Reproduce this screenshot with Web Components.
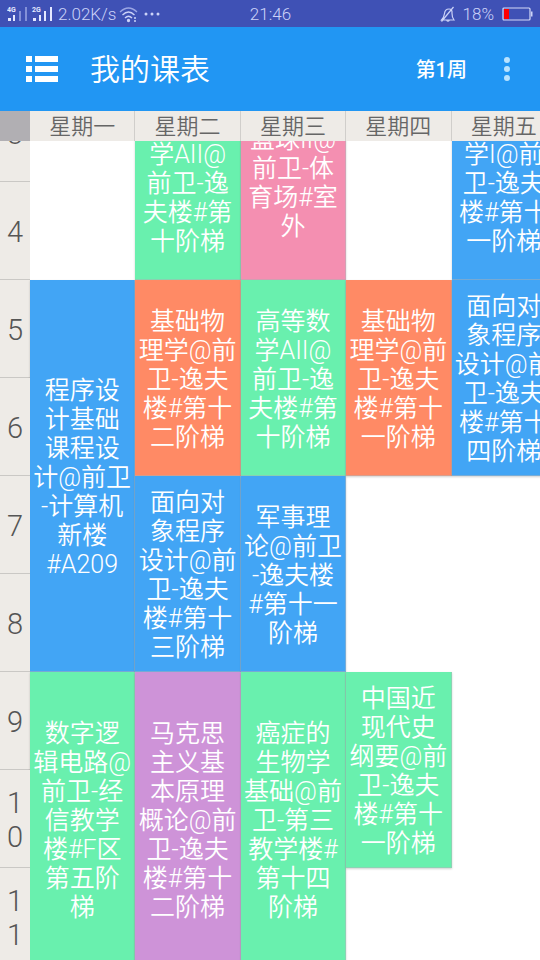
<!DOCTYPE html>
<html lang="zh-CN">
<head>
<meta charset="utf-8">
<meta name="viewport" content="width=device-width, initial-scale=1">
<title>我的课表</title>
<style>
  body { margin: 0; font-family: Roboto, "Noto Sans CJK SC", sans-serif; }
</style>
</head>
<body>
<timetable-app></timetable-app>

<script>
class ShadowElement extends HTMLElement {
  constructor() {
    super();
    this.attachShadow({ mode: 'open' }).innerHTML = this.constructor.markup;
  }
}

class StatusBar extends ShadowElement {
  static markup = `
    <style>
      :host { display: grid; grid-template-columns: 1fr auto 1fr; align-items: center;
              height: 27px; padding: 1px 2px 0 7px; background: #3f51b5; color: #ccd3f8;
              font-size: 17px; font-weight: 350; line-height: 26px; box-sizing: border-box; }
      div { display: flex; align-items: center; gap: 3px; white-space: nowrap; }
      .right { justify-content: flex-end; gap: 7px; }
      svg { display: block; flex: none; }
      time { padding-right: 4px; }
      .net { font: 700 7px Roboto, sans-serif; fill: #e4e8ff; }
    </style>
    <div class="left">
      <svg width="48" height="18" viewBox="0 0 48 18" aria-hidden="true">
        <text class="net" x="0" y="7">4G</text>
        <path fill="#e4e8ff" d="M1 13h3v3H1zM6 10h2v6H6z"/>
        <path fill="#8390d8" d="M12 6h2v10h-2zM18 2h2v14h-2z"/>
        <text class="net" x="25" y="7">2G</text>
        <path fill="#e4e8ff" d="M26 13h3v3h-3zM32 10h2v6h-2zM37 6h2v10h-2zM43 2h2v14h-2z"/>
      </svg>
      <span>2.02K/s</span>
      <svg width="19" height="17" viewBox="0 0 19 17" fill="none" stroke="#ccd3f8" stroke-width="1.3" aria-hidden="true">
        <path stroke="#9ba6e4" d="M1 6Q9.500-2 18 6"/><path d="M3.500 9Q9.500 3 15.500 9M6 12Q9.500 8.500 13 12"/>
        <circle cx="9.500" cy="14.500" r="1" fill="#ccd3f8"/><path d="M15 12h2M15 15h2"/>
      </svg>
      <svg width="24" height="6" viewBox="0 0 24 6" fill="#ccd3f8" aria-hidden="true">
        <circle cx="5" cy="3" r="1.500"/><circle cx="11" cy="3" r="1.500"/><circle cx="17" cy="3" r="1.500"/>
      </svg>
    </div>
    <time>21:46</time>
    <div class="right">
      <svg width="16" height="17" viewBox="0 0 16 17" fill="none" stroke="#ccd3f8" stroke-width="1.200" aria-hidden="true">
        <path d="M1.500 14Q4 11.500 4.500 7.500Q5 3 9 3Q12.500 3 12 7.500Q12 11.500 14 14ZM6.500 14Q8 16.500 9.500 14M13.500 1L1.500 15.500"/>
      </svg>
      <span>18%</span>
      <svg width="37" height="14" viewBox="0 0 37 14" aria-hidden="true">
        <rect x="2" y="1" width="27" height="12" rx="1" fill="none" stroke="#d5daf7" stroke-width="1.200"/>
        <path fill="#f00" d="M3 2h5v10H3z"/><path fill="#ccd3f8" d="M30 4.500h1.500v5H30z"/>
      </svg>
    </div>`;
}

class AppBar extends ShadowElement {
  static markup = `
    <style>
      :host { display: flex; align-items: center; height: 84px; padding: 0 20px 0 26px;
              box-sizing: border-box; background: #2196f3; color: #fff; }
      button { all: unset; display: block; cursor: pointer; }
      button:focus-visible { outline: 2px solid #fff; }
      svg { display: block; }
      h1 { flex: 1; margin: 0 0 0 32px; padding-top: 2px; font-size: 30px; font-weight: 350; line-height: 40px; }
      .week { padding-top: 2px; font-size: 20px; font-weight: 500; line-height: 28px; margin-right: 27px; }
    </style>
    <button aria-label="菜单">
      <svg width="32" height="26" viewBox="0 0 32 26" fill="#fff">
        <path d="M0 0h6v6H0zM9 0h23v6H9zM0 10h6v6H0zM9 10h23v6H9zM0 20h6v6H0zM9 20h23v6H9z"/>
      </svg>
    </button>
    <h1><slot></slot></h1>
    <button class="week"><slot name="week"></slot></button>
    <button aria-label="更多">
      <svg width="26" height="26" viewBox="0 0 26 26" fill="#b9e3ff">
        <circle cx="13" cy="4" r="3"/><circle cx="13" cy="13" r="3"/><circle cx="13" cy="22" r="3"/>
      </svg>
    </button>`;
}

class CourseCard extends ShadowElement {
  static markup = `
    <style>
      :host { display: flex; align-items: center; justify-content: center; height: 100%;
              box-sizing: border-box; padding-top: 3px; background: var(--tone);
              border: solid #b0b5ba80; border-width: 0 1px 1px 0;
              box-shadow: 0 1px 2px #00000030; color: #fff;
              font-size: 25px; font-weight: 350; line-height: 29px;
              text-align: center; white-space: nowrap; }
      :host([tone=blue]) { --tone: #42a5f5; }
      :host([tone=green]) { --tone: #69f0ae; }
      :host([tone=orange]) { --tone: #ff8a65; }
      :host([tone=pink]) { --tone: #f48fb1; }
      :host([tone=purple]) { --tone: #ce93d8; }
    </style>
    <div><slot></slot></div>`;
}

const DAYS = ['星期一', '星期二', '星期三', '星期四', '星期五'];
const PERIODS = 11;
const COURSES = [
  { day: 1, start: 3, span: 2, tone: 'green', lines: ['高等数', '学AII@', '前卫-逸', '夫楼#第', '十阶梯'] },
  { day: 2, start: 3, span: 2, tone: 'pink', lines: ['篮球II@', '前卫-体', '育场#室', '外'] },
  { day: 4, start: 3, span: 2, tone: 'blue', lines: ['大学数', '学I@前', '卫-逸夫', '楼#第十', '一阶梯'] },
  { day: 0, start: 5, span: 4, tone: 'blue', lines: ['程序设', '计基础', '课程设', '计@前卫', '-计算机', '新楼', '#A209'] },
  { day: 1, start: 5, span: 2, tone: 'orange', lines: ['基础物', '理学@前', '卫-逸夫', '楼#第十', '二阶梯'] },
  { day: 2, start: 5, span: 2, tone: 'green', lines: ['高等数', '学AII@', '前卫-逸', '夫楼#第', '十阶梯'] },
  { day: 3, start: 5, span: 2, tone: 'orange', lines: ['基础物', '理学@前', '卫-逸夫', '楼#第十', '一阶梯'] },
  { day: 4, start: 5, span: 2, tone: 'blue', lines: ['面向对', '象程序', '设计@前', '卫-逸夫', '楼#第十', '四阶梯'] },
  { day: 1, start: 7, span: 2, tone: 'blue', lines: ['面向对', '象程序', '设计@前', '卫-逸夫', '楼#第十', '三阶梯'] },
  { day: 2, start: 7, span: 2, tone: 'blue', lines: ['军事理', '论@前卫', '-逸夫楼', '#第十一', '阶梯'] },
  { day: 0, start: 9, span: 3, tone: 'green', lines: ['数字逻', '辑电路@', '前卫-经', '信教学', '楼#F区', '第五阶', '梯'] },
  { day: 1, start: 9, span: 3, tone: 'purple', lines: ['马克思', '主义基', '本原理', '概论@前', '卫-逸夫', '楼#第十', '二阶梯'] },
  { day: 2, start: 9, span: 3, tone: 'green', lines: ['癌症的', '生物学', '基础@前', '卫-第三', '教学楼#', '第十四', '阶梯'] },
  { day: 3, start: 9, span: 2, tone: 'green', lines: ['中国近', '现代史', '纲要@前', '卫-逸夫', '楼#第十', '一阶梯'] }
];

class WeekTable extends ShadowElement {
  static markup = `
    <style>
      :host { display: block; overflow: auto; scrollbar-width: none; background: #fff; }
      table { table-layout: fixed; width: calc(100% + 17px); border-spacing: 0; }
      col.period { width: 30px; }
      th, td { padding: 0; box-sizing: border-box; }
      thead th, thead td { position: sticky; top: 0; z-index: 1; height: 30px; background: #eeebe7;
                 border-right: 1px solid #d0cecb; color: #666; font-size: 22px;
                 font-weight: 350; line-height: 28px; white-space: nowrap; }
      thead th { padding-top: 2px; }
      thead td { background: #b1afb3; border: 0; }
      tbody tr { height: 98px; }
      tbody th { padding: 3px 6px 0; background: #eeebe7; border-bottom: 1px solid #cac8c5;
                 color: #555; font-size: 29px; font-weight: 350; line-height: 34px;
                 word-break: break-all; }
      tbody td { height: 1px; }
    </style>
    <table>
      <colgroup><col class="period"><col span="5"></colgroup>
      <thead><tr><td></td></tr></thead>
      <tbody></tbody>
    </table>`;

  connectedCallback() {
    const head = this.shadowRoot.querySelector('thead tr');
    const body = this.shadowRoot.querySelector('tbody');
    head.insertAdjacentHTML('beforeend', DAYS.map(d => `<th scope="col">${d}</th>`).join(''));
    let rows = '';
    for (let p = 1; p <= PERIODS; p++) {
      rows += `<tr><th scope="row">${p}</th>`;
      DAYS.forEach((_, day) => {
        const course = COURSES.find(c => c.day === day && p >= c.start && p < c.start + c.span);
        if (!course) rows += '<td></td>';
        else if (course.start === p)
          rows += `<td rowspan="${course.span}"><course-card tone="${course.tone}">${course.lines.join('<br>')}</course-card></td>`;
      });
      rows += '</tr>';
    }
    body.innerHTML = rows;
  }
}

class TimetableApp extends ShadowElement {
  static markup = `
    <style>
      :host { display: flex; flex-direction: column; height: 100vh; }
      status-bar, app-bar { flex: none; }
      week-table { flex: 1; min-height: 0; }
    </style>
    <status-bar></status-bar>
    <app-bar>我的课表<span slot="week">第1周</span></app-bar>
    <week-table></week-table>`;
}

customElements.define('status-bar', StatusBar);
customElements.define('app-bar', AppBar);
customElements.define('course-card', CourseCard);
customElements.define('week-table', WeekTable);
customElements.define('timetable-app', TimetableApp);

document.querySelector('timetable-app').shadowRoot.querySelector('week-table').scrollTop = 253;
</script>
</body>
</html>
